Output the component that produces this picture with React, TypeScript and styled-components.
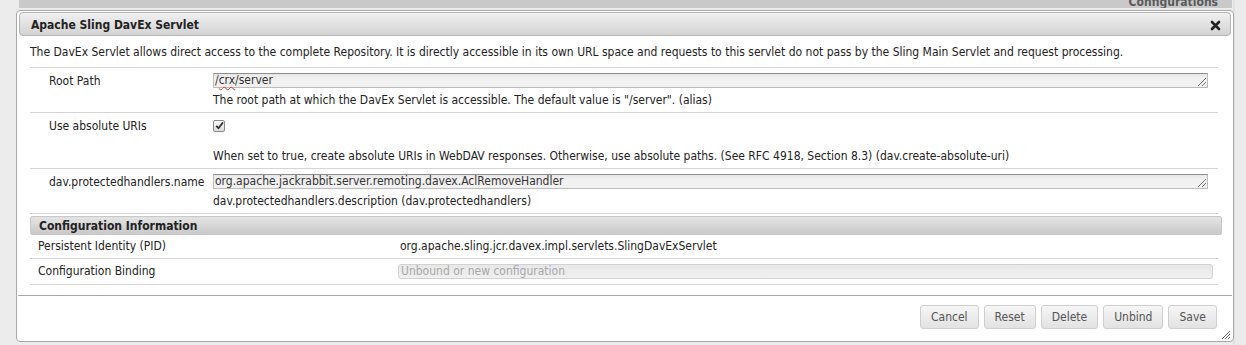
import React from 'react';
import styled, { createGlobalStyle } from 'styled-components';

const GlobalStyle = createGlobalStyle`
  html, body {
    margin: 0;
    padding: 0;
    background: #ececec;
  }
  body {
    font-family: Tahoma, "DejaVu Sans", Verdana, sans-serif;
    font-stretch: condensed;
    font-size: 12px;
    color: #222;
  }
`;

const Page = styled.div`
  width: 1246px;
  height: 345px;
  overflow: hidden;
  background: linear-gradient(to right, #ececec 0, #ececec 1233px, #e2e2e2 1233px, #e2e2e2 1235px, #ebebeb 1235px);
`;

const BackBar = styled.div`
  margin-left: 19px;
  width: 1213px;
  height: 8px;
  background: #c9c9c9;
  overflow: hidden;
  display: flex;
  align-items: flex-end;
  justify-content: flex-end;
  padding-right: 14px;
  box-sizing: border-box;
`;

const BackTitle = styled.span`
  font-weight: bold;
  font-size: 12px;
  line-height: 14px;
  margin-bottom: -1px;
  color: #5a5a5a;
`;

const Dialog = styled.div`
  margin: 2px 0 0 16px;
  width: 1218px;
  box-sizing: border-box;
  background: #fff;
  border: 1px solid #a8a8a8;
  border-radius: 4px;
  padding: 1px 2px 0;
`;

const TitleBar = styled.div`
  height: 24px;
  box-sizing: border-box;
  border: 1px solid #b4b4b4;
  border-radius: 4px;
  background: linear-gradient(#f0f0f0, #d3d3d3);
  display: flex;
  align-items: center;
  justify-content: space-between;
  padding: 2px 9px 0 11px;
`;

const TitleText = styled.span`
  font-weight: bold;
  color: #222;
`;

const Content = styled.div`
  padding: 0 13px 10px 11px;
`;

const Description = styled.div`
  line-height: 15px;
  padding: 9px 0 7px;
  border-bottom: 1px solid #d4d4d4;
`;

const PropRow = styled.div`
  display: grid;
  grid-template-columns: 183px 1fr;
  border-bottom: 1px solid #d4d4d4;
  padding: 5px 0 4px;
`;

const PropLabel = styled.div`
  padding-left: 19px;
  line-height: 15px;
  padding-top: 1px;
`;

const PropValue = styled.div`
  display: flex;
  flex-direction: column;
  padding-right: 10px;
`;

const TextField = styled.div`
  position: relative;
  height: 15px;
  box-sizing: border-box;
  border: 1px solid #bdbdbd;
  border-top-color: #8e8e8e;
  background: linear-gradient(#e6e6e6, #f1f1f1 4px);
  line-height: 13px;
  padding: 0 1px;
  color: #333;
  white-space: nowrap;
  &::after {
    content: '';
    position: absolute;
    right: 1px;
    bottom: 1px;
    width: 8px;
    height: 8px;
    background: linear-gradient(135deg, transparent 45%, #777 45%, #777 52%, transparent 52%, transparent 70%, #777 70%, #777 77%, transparent 77%);
  }
`;

const Misspelled = styled.span`
  text-decoration: underline wavy #d33;
  text-decoration-thickness: 1px;
  text-underline-offset: 2px;
`;

const Help = styled.div<{ $gap?: number }>`
  line-height: 15px;
  margin-top: ${p => p.$gap ?? 5}px;
  color: #222;
`;

const CheckWrap = styled.div`
  height: 15px;
  display: flex;
  align-items: center;
`;

const CheckBox = styled.span`
  width: 12px;
  height: 12px;
  box-sizing: border-box;
  border: 1px solid #8a8a8a;
  border-radius: 2px;
  background: linear-gradient(#fbfbfb, #dcdcdc);
  display: flex;
  align-items: center;
  justify-content: center;
`;

const InfoHeader = styled.div`
  margin-top: 2px;
  width: calc(100% + 4px);
  height: 19px;
  box-sizing: border-box;
  border: 1px solid #c8c8c8;
  border-radius: 2px;
  background: linear-gradient(#e4e4e4, #c9c9c9);
  font-weight: bold;
  line-height: 18px;
  padding-left: 8px;
`;

const InfoRow = styled.div`
  display: grid;
  grid-template-columns: 368px 1fr;
  border-bottom: 1px solid #d4d4d4;
  padding: 4px 0 4px;
  align-items: center;
`;

const InfoLabel = styled.div`
  padding-left: 8px;
  line-height: 15px;
`;

const InfoValue = styled.div`
  padding-left: 2px;
  line-height: 15px;
`;

const BindingField = styled.div`
  height: 15px;
  margin: 1px 5px 1px 0;
  box-sizing: border-box;
  border: 1px solid #d2d2d2;
  border-radius: 3px;
  background: linear-gradient(#e8e8e8, #f0f0f0);
  line-height: 13px;
  padding-left: 2px;
  color: #a8a8a8;
`;

const ButtonPane = styled.div`
  position: relative;
  border-top: 1px solid #a8a8a8;
  margin: 0 -1px;
  display: flex;
  justify-content: flex-end;
  gap: 5px;
  padding: 9px 15px 12px;
`;

const Button = styled.button`
  height: 24px;
  font: inherit;
  color: #555;
  border: 1px solid #cfcfcf;
  border-radius: 3px;
  background: linear-gradient(#f6f6f6, #e2e2e2);
  padding: 0 10px;
`;

const Grip = styled.svg`
  position: absolute;
  right: 1px;
  bottom: 1px;
`;

const buttons = ['Cancel', 'Reset', 'Delete', 'Unbind', 'Save'];

export default function App() {
  return (
    <>
      <GlobalStyle />
      <Page>
        <BackBar>
          <BackTitle>Configurations</BackTitle>
        </BackBar>
        <Dialog>
          <TitleBar>
            <TitleText>Apache Sling DavEx Servlet</TitleText>
            <svg width="11" height="11" viewBox="0 0 11 11">
              <path d="M2 2 L9 9 M9 2 L2 9" stroke="#222" strokeWidth="2.6" strokeLinecap="round" />
            </svg>
          </TitleBar>
          <Content>
            <Description>
              The DavEx Servlet allows direct access to the complete Repository. It is directly accessible in its own URL space and requests to this servlet do not pass by the Sling Main Servlet and request processing.
            </Description>
            <PropRow>
              <PropLabel>Root Path</PropLabel>
              <PropValue>
                <TextField>/<Misspelled>crx</Misspelled>/server</TextField>
                <Help>The root path at which the DavEx Servlet is accessible. The default value is "/server". (alias)</Help>
              </PropValue>
            </PropRow>
            <PropRow>
              <PropLabel>Use absolute URIs</PropLabel>
              <PropValue>
                <CheckWrap>
                  <CheckBox>
                    <svg width="9" height="9" viewBox="0 0 9 9">
                      <path d="M1.2 4.8 L3.5 7.2 L8 1.4" fill="none" stroke="#333" strokeWidth="1.8" />
                    </svg>
                  </CheckBox>
                </CheckWrap>
                <Help $gap={16}>When set to true, create absolute URIs in WebDAV responses. Otherwise, use absolute paths. (See RFC 4918, Section 8.3) (dav.create-absolute-uri)</Help>
              </PropValue>
            </PropRow>
            <PropRow>
              <PropLabel>dav.protectedhandlers.name</PropLabel>
              <PropValue>
                <TextField>org.apache.jackrabbit.server.remoting.davex.AclRemoveHandler</TextField>
                <Help>dav.protectedhandlers.description (dav.protectedhandlers)</Help>
              </PropValue>
            </PropRow>
            <InfoHeader>Configuration Information</InfoHeader>
            <InfoRow>
              <InfoLabel>Persistent Identity (PID)</InfoLabel>
              <InfoValue>org.apache.sling.jcr.davex.impl.servlets.SlingDavExServlet</InfoValue>
            </InfoRow>
            <InfoRow>
              <InfoLabel>Configuration Binding</InfoLabel>
              <BindingField>Unbound or new configuration</BindingField>
            </InfoRow>
          </Content>
          <ButtonPane>
            {buttons.map(b => (
              <Button key={b}>{b}</Button>
            ))}
            <Grip width="10" height="10" viewBox="0 0 10 10">
              <path d="M1 9 L9 1 M4 9 L9 4 M7 9 L9 7" stroke="#666" strokeWidth="1" />
            </Grip>
          </ButtonPane>
        </Dialog>
      </Page>
    </>
  );
}
